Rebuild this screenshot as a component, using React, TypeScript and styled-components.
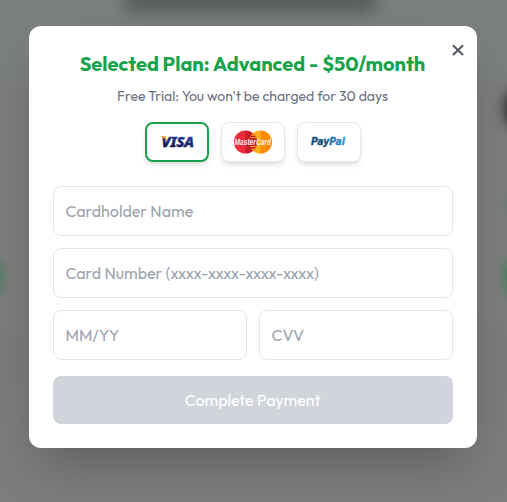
import React, { useState } from "react";
import styled, { createGlobalStyle } from "styled-components";

const GlobalStyle = createGlobalStyle`
  *, *::before, *::after { box-sizing: border-box; }
  body {
    margin: 0;
    overflow: hidden;
    font-family: Outfit, Lato, "Open Sans", sans-serif;
  }
  button, input { font: inherit; margin: 0; }
`;

const Screen = styled.main`
  position: relative;
  display: flex;
  align-items: flex-start;
  height: 502px;
  padding: 26px 0 0 28.5px;
  overflow: hidden;
  background: linear-gradient(#7b807e 0, #7b7f7d 60px, #7e7e7e 180px, #7e7e7e 290px, #7a7d7b 350px, #7b7e7c 100%);
`;

/* Out-of-focus page content behind the dialog. */
const Blob = styled.div<{ $x: number; $y: number; $w: number; $h: number; $color: string; $blur: number }>`
  position: absolute;
  left: ${(p) => p.$x}px;
  top: ${(p) => p.$y}px;
  width: ${(p) => p.$w}px;
  height: ${(p) => p.$h}px;
  border-radius: 8px;
  background: ${(p) => p.$color};
  filter: blur(${(p) => p.$blur}px);
`;

const Dialog = styled.section`
  position: relative;
  width: 448px;
  height: 422px;
  padding: 24px;
  border-radius: 12px;
  background: #fff;
  box-shadow: 0 25px 50px -12px rgba(0, 0, 0, 0.25);
`;

const CloseButton = styled.button`
  position: absolute;
  top: 16px;
  right: 10.5px;
  display: flex;
  padding: 2px;
  border: 0;
  background: none;
  color: #4b5563;
`;

const Title = styled.h2`
  margin: 0 0 8px;
  color: #16a34a;
  font-size: 20px;
  font-weight: 700;
  line-height: 28px;
  text-align: center;
  white-space: nowrap;
`;

const Note = styled.p`
  margin: 0 0 16px;
  color: #6b7280;
  font-size: 14px;
  line-height: 20px;
  text-align: center;
  white-space: nowrap;
`;

const Methods = styled.div`
  display: flex;
  justify-content: center;
  gap: 12px;
  margin-bottom: 24px;
`;

const Method = styled.button<{ $selected: boolean }>`
  display: flex;
  align-items: center;
  justify-content: center;
  width: 64px;
  height: 40px;
  padding: 0;
  border: ${(p) => (p.$selected ? "2px solid #16a34a" : "1px solid #e5e7eb")};
  border-radius: 8px;
  background: #fff;
  box-shadow: 0 4px 6px -1px rgba(0, 0, 0, 0.1), 0 2px 4px -2px rgba(0, 0, 0, 0.1);

  svg { flex: none; display: block; overflow: visible; }
`;

const Form = styled.form`
  display: grid;
  grid-template-columns: 1fr 1fr;
  gap: 12px;
`;

const Field = styled.input<{ $wide?: boolean }>`
  grid-column: ${(p) => (p.$wide ? "1 / -1" : "auto")};
  width: 100%;
  min-width: 0;
  height: 50px;
  padding: 12px;
  border: 1px solid #e5e7eb;
  border-radius: 8px;
  outline: none;
  background: #fff;
  color: #1f2937;
  font-size: 16px;
  line-height: 24px;

  &::placeholder {
    color: #9ca3af;
    opacity: 1;
  }
`;

const Submit = styled.button`
  grid-column: 1 / -1;
  height: 48px;
  margin-top: 4px;
  padding: 0;
  border: 0;
  border-radius: 8px;
  background: #d1d5db;
  color: #fff;
  font-size: 16px;
  font-weight: 400;
  line-height: 24px;
`;

const VisaLogo = () => (
  <svg width="40" height="24" viewBox="0 0 40 24" aria-label="Visa">
    <defs>
      <linearGradient id="visa" x1="0" y1="1" x2="0.4" y2="0">
        <stop offset="0.2" stopColor="#0b1350" />
        <stop offset="1" stopColor="#2740a0" />
      </linearGradient>
    </defs>
    <text x="4.500" y="17" textLength="32.500" lengthAdjust="spacingAndGlyphs" fontFamily="Noto Sans" fontSize="14.500" fontWeight="800" fontStyle="italic" fill="url(#visa)" stroke="url(#visa)" strokeWidth="0.500">VISA</text>
    <path d="M3 6.200h4.800c.8 0 1.200.4 1.400 1l1 4.400C9 9.300 6.500 7.400 3 6.200z" fill="#f5a623" />
  </svg>
);

const MasterCardLogo = () => (
  <svg width="40" height="24" viewBox="0 0 40 24" aria-label="MasterCard">
    <defs>
      <linearGradient id="mcRed" x1="0" y1="0" x2="1" y2="0">
        <stop offset="0.48" stopColor="#ec2c3a" />
        <stop offset="0.52" stopColor="#c91d2b" />
      </linearGradient>
      <linearGradient id="mcOrange" x1="0" y1="0" x2="1" y2="0">
        <stop offset="0.48" stopColor="#ffae18" />
        <stop offset="0.52" stopColor="#ff8a00" />
      </linearGradient>
    </defs>
    <circle cx="27.500" cy="12" r="11.600" fill="url(#mcOrange)" />
    <circle cx="12.500" cy="12" r="11.600" fill="url(#mcRed)" />
    <path d="M20 3.200a11.600 11.600 0 0 0-2.300 2.500h4.600A11.600 11.600 0 0 0 20 3.200zM17 7h6v1h-6.600zM17 16h6v1h-5.500zM18 18.500h4l-2 2.300z" fill="#f79a1c" />
    <text x="1.500" y="15" textLength="36.500" lengthAdjust="spacingAndGlyphs" fontFamily="Liberation Sans" fontSize="8.600" fontWeight="700" fontStyle="italic" fill="#fff" fillOpacity="0.95">MasterCard</text>
  </svg>
);

const PayPalLogo = () => (
  <svg width="40" height="24" viewBox="0 0 40 24" aria-label="PayPal">
    <defs>
      <linearGradient id="paypal" x1="0" y1="0" x2="1" y2="0">
        <stop offset="0" stopColor="#12527e" />
        <stop offset="0.5" stopColor="#0d4a73" />
        <stop offset="0.54" stopColor="#1670a4" />
        <stop offset="1" stopColor="#2694ca" />
      </linearGradient>
    </defs>
    <text x="2" y="15.200" textLength="34" lengthAdjust="spacingAndGlyphs" fontFamily="DejaVu Sans" fontSize="11" fontWeight="700" fontStyle="italic" fill="url(#paypal)" stroke="url(#paypal)" strokeWidth="0.300">PayPal</text>
  </svg>
);

const methods = [
  { id: "visa", Logo: VisaLogo },
  { id: "mastercard", Logo: MasterCardLogo },
  { id: "paypal", Logo: PayPalLogo },
];

export default function App() {
  const [selected, setSelected] = useState("visa");

  return (
    <>
      <GlobalStyle />
      <Screen>
        <Blob $x={124} $y={-24} $w={253} $h={37} $color="#575e5c" $blur={8} />
        <Blob $x={-30} $y={260} $w={31} $h={34} $color="#3d7f59" $blur={6} />
        <Blob $x={507} $y={260} $w={40} $h={34} $color="#20804a" $blur={6} />
        <Blob $x={506} $y={92} $w={40} $h={33} $color="#1a1a1a" $blur={7} />
        <Blob $x={510} $y={196} $w={40} $h={20} $color="#43795a" $blur={6} />
        <Dialog role="dialog" aria-modal="true">
          <CloseButton aria-label="Close">
            <svg width="12" height="12" viewBox="0 0 12 12" fill="none" stroke="currentColor" strokeWidth="1.900">
              <path d="M.9 1.200l10.200 9.800M11.100 1.200L.9 11" />
            </svg>
          </CloseButton>
          <Title>Selected Plan: Advanced - $50/month</Title>
          <Note>Free Trial: You won't be charged for 30 days</Note>
          <Methods>
            {methods.map(({ id, Logo }) => (
              <Method key={id} type="button" $selected={selected === id} onClick={() => setSelected(id)}>
                <Logo />
              </Method>
            ))}
          </Methods>
          <Form>
            <Field $wide placeholder="Cardholder Name" />
            <Field $wide placeholder="Card Number (xxxx-xxxx-xxxx-xxxx)" />
            <Field placeholder="MM/YY" />
            <Field placeholder="CVV" />
            <Submit type="button">Complete Payment</Submit>
          </Form>
        </Dialog>
      </Screen>
    </>
  );
}
